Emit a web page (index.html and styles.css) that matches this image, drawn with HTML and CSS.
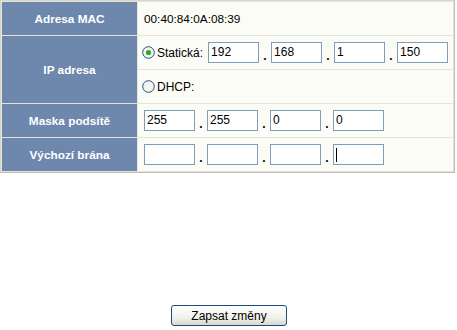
FILE: index.html
```html
<!DOCTYPE html>
<html lang="cs">
<head>
<meta charset="utf-8">
<link rel="stylesheet" href="styles.css">
</head>
<body>
<table class="cfg">
  <tr>
    <td class="lbl">Adresa MAC</td>
    <td class="val"><span class="mac">00:40:84:0A:08:39</span></td>
  </tr>
  <tr>
    <td class="lbl" rowspan="2">IP adresa</td>
    <td class="val">
      <div class="row">
        <svg class="radio" width="13" height="13" viewBox="0 0 13 13"><circle cx="6.5" cy="6.5" r="5.8" fill="#f4f4f0" stroke="#1c5180" stroke-width="1"/><circle cx="6.5" cy="6.5" r="2.6" fill="#2fa82f"/></svg>
        <span class="rtxt">Statická:</span>
        <div class="ip">
          <span class="box">192</span><span class="dot">.</span><span class="box">168</span><span class="dot">.</span><span class="box">1</span><span class="dot">.</span><span class="box">150</span>
        </div>
      </div>
    </td>
  </tr>
  <tr>
    <td class="val">
      <div class="row">
        <svg class="radio" width="13" height="13" viewBox="0 0 13 13"><circle cx="6.5" cy="6.5" r="5.8" fill="#f4f4f0" stroke="#1c5180" stroke-width="1"/></svg>
        <span class="rtxt">DHCP:</span>
      </div>
    </td>
  </tr>
  <tr>
    <td class="lbl">Maska podsítě</td>
    <td class="val">
      <div class="ip ip-wide">
        <span class="box">255</span><span class="dot">.</span><span class="box">255</span><span class="dot">.</span><span class="box">0</span><span class="dot">.</span><span class="box">0</span>
      </div>
    </td>
  </tr>
  <tr>
    <td class="lbl">Výchozí brána</td>
    <td class="val">
      <div class="ip ip-wide">
        <span class="box"></span><span class="dot">.</span><span class="box"></span><span class="dot">.</span><span class="box"></span><span class="dot">.</span><span class="box"><span class="caret"></span></span>
      </div>
    </td>
  </tr>
</table>
<div class="actions">
  <button class="btn" type="button">Zapsat změny</button>
</div>
</body>
</html>
```
FILE: styles.css
```css
html, body {
  margin: 0;
  padding: 0;
  background: #ffffff;
  font-family: "Liberation Sans", Arial, sans-serif;
}
.cfg {
  width: 455px;
  border-collapse: separate;
  border-spacing: 1px;
  border: 1px solid #bcbcb4;
  border-top-color: #d6d6cc;
  border-left-color: #d6d6cc;
  background: #e4e4da;
}
.cfg td {
  height: 33px;
  padding: 0;
  vertical-align: middle;
}
.lbl {
  width: 135px;
  background: #6e88ad;
  color: #ffffff;
  font-weight: bold;
  font-size: 11.8px;
  text-align: center;
}
.val {
  background: #fcfcf6;
  color: #000000;
  font-size: 11.8px;
}
.mac {
  padding-left: 6px;
}
.row {
  display: flex;
  align-items: center;
  padding-left: 4px;
}
.radio {
  display: block;
  flex: none;
}
.rtxt {
  margin-left: 2px;
  font-size: 12px;
  color: #000;
}
.ip {
  display: flex;
  align-items: center;
  margin-left: 5px;
}
.ip-wide {
  margin-left: 6px;
}
.box {
  box-sizing: border-box;
  width: 51px;
  height: 21px;
  border: 1px solid #7f9db9;
  background: #ffffff;
  font-size: 12px;
  line-height: 19px;
  padding-left: 2px;
  display: flex;
  align-items: center;
}
.dot {
  width: 12px;
  text-align: center;
  font-size: 12px;
  font-weight: bold;
  padding-top: 6px;
}
.caret {
  display: block;
  width: 1px;
  height: 14px;
  background: #000;
}
.actions {
  display: flex;
  justify-content: center;
  margin-top: 132px;
  padding-left: 1px;
}
.btn {
  box-sizing: border-box;
  width: 116px;
  height: 21px;
  padding: 0;
  border: 1px solid #1d4a7a;
  border-radius: 3px;
  background: linear-gradient(#ffffff, #f2f2ec 60%, #d8d8cf);
  font-family: "Liberation Sans", Arial, sans-serif;
  font-size: 12px;
  color: #000;
}
```
